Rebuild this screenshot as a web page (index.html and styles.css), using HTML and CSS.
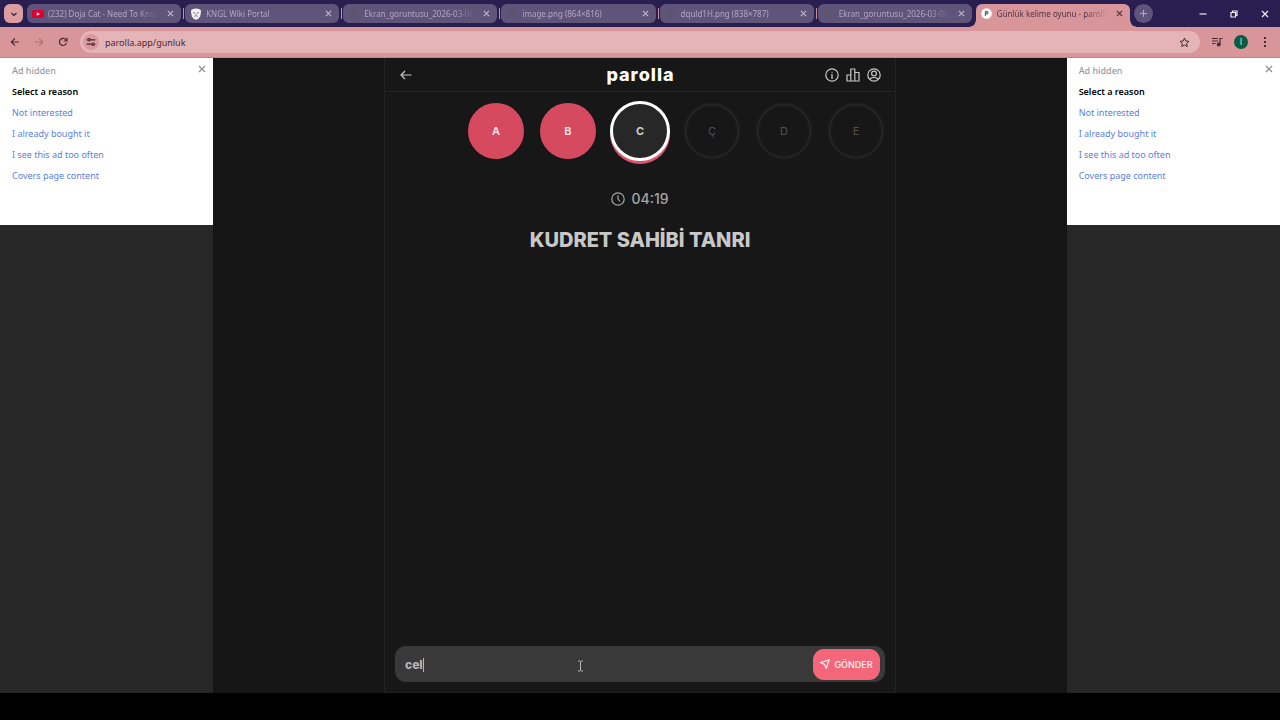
FILE: index.html
```html
<!DOCTYPE html>
<html lang="tr">
<head>
<meta charset="utf-8">
<meta name="viewport" content="width=device-width, initial-scale=1">
<title>Günlük kelime oyunu - parolla</title>
<link rel="stylesheet" href="styles.css">
</head>
<body>
<svg class="defs" aria-hidden="true">
  <symbol id="x" viewBox="0 0 8 8"><path d="M1 1l6 6M7 1L1 7"/></symbol>
</svg>

<header class="browser">
  <div class="tabbar">
    <button class="tab-search" aria-label="Search tabs"><svg width="8" height="8" viewBox="0 0 8 8"><path d="M1.500 3L4 5.500 6.500 3"/></svg></button>
    <div class="tabs">
      <div class="tab">
        <span class="favicon"><svg width="12" height="10" viewBox="0 0 12 10"><rect y="1" width="12" height="8" rx="2" fill="#e0002f"/><path d="M4.800 3.200v3.600L8 5z" fill="#fff"/></svg></span>
        <span class="tab-title">(232) Doja Cat - Need To Know</span>
        <button class="tab-close" aria-label="Close tab"><svg width="7" height="7"><use href="#x"/></svg></button>
      </div>
      <div class="tab">
        <span class="favicon"><svg width="12" height="12" viewBox="0 0 12 12"><path d="M1 2.200L3 1l3-.6L9 1l2 1.200-.2 3-.7 3.300L8 11l-2 .8L4 11 1.900 8.500 1.200 5.200z" fill="#f3f1f6"/><path d="M3 4.500l2 .8M9 4.500l-2 .8M4.200 8.300q1.800-1.200 3.600 0M6 5.500v1.300" fill="none" stroke="#5f5479" stroke-width=".8"/></svg></span>
        <span class="tab-title">KNGL Wiki Portal</span>
        <button class="tab-close" aria-label="Close tab"><svg width="7" height="7"><use href="#x"/></svg></button>
      </div>
      <div class="tab">
        <span class="favicon"><i class="blank"></i></span>
        <span class="tab-title">Ekran_goruntusu_2026-03-06_</span>
        <button class="tab-close" aria-label="Close tab"><svg width="7" height="7"><use href="#x"/></svg></button>
      </div>
      <div class="tab">
        <span class="favicon"><i class="blank"></i></span>
        <span class="tab-title">image.png (864×816)</span>
        <button class="tab-close" aria-label="Close tab"><svg width="7" height="7"><use href="#x"/></svg></button>
      </div>
      <div class="tab">
        <span class="favicon"><i class="blank"></i></span>
        <span class="tab-title">dquld1H.png (838×787)</span>
        <button class="tab-close" aria-label="Close tab"><svg width="7" height="7"><use href="#x"/></svg></button>
      </div>
      <div class="tab">
        <span class="favicon"><i class="blank"></i></span>
        <span class="tab-title">Ekran_goruntusu_2026-03-06_</span>
        <button class="tab-close" aria-label="Close tab"><svg width="7" height="7"><use href="#x"/></svg></button>
      </div>
      <div class="tab current">
        <span class="favicon"><svg width="11" height="11" viewBox="0 0 11 11"><circle cx="5.500" cy="5.500" r="5.300" fill="#fff"/><path d="M4.300 8V3.300h1.400a1.400 1.400 0 010 2.800H4.300" fill="#8a8" stroke="#4d6659" stroke-width="1"/></svg></span>
        <span class="tab-title">Günlük kelime oyunu - parolla</span>
        <button class="tab-close" aria-label="Close tab"><svg width="7" height="7"><use href="#x"/></svg></button>
      </div>
    </div>
    <button class="new-tab" aria-label="New tab"><svg width="9" height="9" viewBox="0 0 9 9"><path d="M4.500 1v7M1 4.500h7"/></svg></button>
    <div class="window-controls">
      <button aria-label="Minimize"><svg width="8" height="8" viewBox="0 0 8 8"><path d="M.5 4h7"/></svg></button>
      <button aria-label="Restore"><svg width="8" height="8" viewBox="0 0 8 8"><path d="M1 2.500h4.500V7H1zM2.500 2.500V1H7v4.500H5.500"/></svg></button>
      <button aria-label="Close"><svg width="8" height="8"><use href="#x"/></svg></button>
    </div>
  </div>
  <nav class="toolbar" aria-label="Browser">
    <div class="nav-buttons">
      <button aria-label="Back"><svg width="10" height="10" viewBox="0 0 10 10"><path d="M9 5H1.500M5 1.300L1.300 5 5 8.700"/></svg></button>
      <button class="disabled" aria-label="Forward" disabled><svg width="10" height="10" viewBox="0 0 10 10"><path d="M1 5h7.500M5 1.300L8.700 5 5 8.700"/></svg></button>
      <button aria-label="Reload"><svg width="10" height="10" viewBox="0 0 10 10"><path d="M8.500 6A3.600 3.600 0 118 2.800L9 4M9 .8V4H5.800"/></svg></button>
    </div>
    <div class="address">
      <button class="site-info" aria-label="Site information"><svg width="10" height="10" viewBox="0 0 10 10"><path d="M.8 2.800h1M4.200 2.800h5M.8 7.200h5M8.500 7.200h.8"/><circle cx="3" cy="2.800" r="1.200"/><circle cx="7.200" cy="7.200" r="1.200"/></svg></button>
      <label class="url"><span class="sr">Address</span><input type="text" value="parolla.app/gunluk"></label>
      <button class="star" aria-label="Bookmark"><svg width="11" height="11" viewBox="0 0 11 11"><path d="M5.500 1l1.300 3 3.200.3-2.400 2.100.7 3.200-2.800-1.700-2.800 1.700.7-3.200L1 4.300 4.200 4z"/></svg></button>
    </div>
    <div class="tools">
      <button aria-label="Media"><svg width="12" height="10" viewBox="0 0 12 10"><path d="M1 1.500h6M1 4h6M1 6.500h3.500M9 7V1.500h2.500"/><circle cx="7.700" cy="7.500" r="1.400" fill="#4a2a33"/></svg></button>
      <button class="avatar" aria-label="Profile">I</button>
      <button aria-label="Menu"><svg width="4" height="12" viewBox="0 0 4 12"><path class="dots" d="M1 1h2v2H1zM1 5h2v2H1zM1 9h2v2H1z"/></svg></button>
    </div>
  </nav>
</header>

<div class="page">
  <aside class="rail">
    <section class="ad">
      <button class="ad-close" aria-label="Close"><svg width="8" height="8"><use href="#x"/></svg></button>
      <p class="ad-status">Ad hidden</p>
      <h2>Select a reason</h2>
      <a href="#">Not interested</a>
      <a href="#">I already bought it</a>
      <a href="#">I see this ad too often</a>
      <a href="#">Covers page content</a>
    </section>
  </aside>

  <main class="game">
    <div class="game-head">
      <button aria-label="Geri"><svg width="12" height="12" viewBox="0 0 12 12"><path d="M11.500 6H1M5 2L1 6l4 4"/></svg></button>
      <h1>parolla</h1>
      <div class="head-actions">
        <button aria-label="Bilgi"><svg width="14" height="14" viewBox="0 0 14 14"><circle cx="7" cy="7" r="6.200"/><path d="M6.300 6.500H7v3.300M6 10h2.200M6.600 4.300h.9"/></svg></button>
        <button aria-label="İstatistik"><svg width="14" height="14" viewBox="0 0 14 14"><path d="M1 7h3.800v6H1zM4.800 1h4v12h-4zM8.800 4.500H13V13H8.800z"/></svg></button>
        <button aria-label="Profil"><svg width="14" height="14" viewBox="0 0 14 14"><circle cx="7" cy="7" r="6.200"/><circle cx="7" cy="5.600" r="2.400"/><path d="M3 11.500C3.500 9.800 4.700 9.500 7 9.500s3.500.3 4 2"/></svg></button>
      </div>
    </div>

    <ol class="letters">
      <li class="wrong">A</li>
      <li class="wrong">B</li>
      <li class="active">C</li>
      <li>Ç</li>
      <li>D</li>
      <li>E</li>
    </ol>

    <p class="timer"><svg width="14" height="14" viewBox="0 0 14 14"><circle cx="7" cy="7" r="6.200"/><path d="M7 3.200V7l2 2.500"/></svg><time>04:19</time></p>
    <h2 class="question">KUDRET SAHİBİ TANRI</h2>

    <form class="answer">
      <label class="field"><span class="sr">Cevap</span><input type="text" value="cel"><i class="caret"></i></label>
      <button type="button" class="send"><svg width="10" height="10" viewBox="0 0 10 10"><path d="M9.200.8L6.300 9.200 4.600 5.400.8 3.700z"/></svg>GÖNDER</button>
      <svg class="pointer" width="7" height="12" viewBox="0 0 7 12"><path d="M1 1h1.700l.8.600.8-.6H6M3.500 1.500v9M1 11h1.700l.8-.6.8.6H6"/></svg>
    </form>
  </main>

  <aside class="rail">
    <section class="ad">
      <button class="ad-close" aria-label="Close"><svg width="8" height="8"><use href="#x"/></svg></button>
      <p class="ad-status">Ad hidden</p>
      <h2>Select a reason</h2>
      <a href="#">Not interested</a>
      <a href="#">I already bought it</a>
      <a href="#">I see this ad too often</a>
      <a href="#">Covers page content</a>
    </section>
  </aside>
</div>
</body>
</html>
```

FILE: styles.css
```css
* { box-sizing: border-box; }

body {
  margin: 0;
  min-height: 100vh;
  padding-bottom: 27px;
  display: flex;
  flex-direction: column;
  background: #000;
  font-family: "Noto Sans", "Open Sans", sans-serif;
}

h1, h2, p, ol { margin: 0; padding: 0; }

button {
  display: flex;
  align-items: center;
  justify-content: center;
  padding: 0;
  border: 0;
  background: none;
  color: inherit;
  font: inherit;
}

input {
  width: 100%;
  padding: 0;
  border: 0;
  outline: 0;
  background: none;
  color: inherit;
  font: inherit;
}

svg {
  display: block;
  flex: none;
  fill: none;
  stroke: currentColor;
  stroke-width: 1.2;
}

.defs { position: absolute; width: 0; height: 0; }

.sr {
  position: absolute;
  width: 1px;
  height: 1px;
  overflow: hidden;
  clip-path: inset(50%);
}

/* Browser frame */
.browser { font-family: "Noto Sans", sans-serif; }

.tabbar {
  display: flex;
  height: 27px;
  padding: 4px 0 0 4px;
  background: #281e50;
  font-size: 8px;
}

.tab-search {
  width: 19px;
  height: 19px;
  margin-right: 4px;
  border-radius: 6px;
  background: #db9ca2;
  color: #3c2230;
}

.tabs {
  display: flex;
  flex: 0 1 1103px;
  min-width: 0;
  gap: 4px;
}

.tab {
  position: relative;
  display: flex;
  align-items: center;
  flex: 1 1 0;
  min-width: 0;
  height: 19px;
  padding: 0 7px 0 4px;
  border-radius: 6px;
  background: #5f5479;
  color: #b3a6c6;
}

.tab:not(.current):not(:nth-child(6))::after {
  content: "";
  position: absolute;
  top: 4px;
  right: -3px;
  width: 1px;
  height: 11px;
  background: #c88d9f;
}

.favicon {
  display: flex;
  justify-content: center;
  flex: none;
  width: 13px;
  margin-right: 4px;
}

.favicon svg { stroke: none; }

.blank {
  width: 8px;
  height: 9px;
  border-radius: 2px;
  background: #5d5570;
}

.tab-title {
  flex: 1;
  overflow: hidden;
  white-space: nowrap;
  mask-image: linear-gradient(to right, #000 80%, transparent);
}

.tab-close { margin-left: 8px; color: #c5bad3; }

.tab.current {
  height: 23px;
  padding-bottom: 4px;
  border-radius: 6px 6px 0 0;
  background: #d8969b;
  color: #553244;
}

.tab.current::before,
.tab.current::after {
  content: "";
  position: absolute;
  bottom: 0;
  width: 6px;
  height: 6px;
}

.tab.current::before {
  left: -6px;
  background: radial-gradient(circle at 0 0, transparent 5px, #d8969b 6px);
}

.tab.current::after {
  right: -6px;
  background: radial-gradient(circle at 100% 0, transparent 5px, #d8969b 6px);
}

.tab.current .tab-close { color: #4a2a33; }

.new-tab {
  width: 19px;
  height: 19px;
  margin-left: 4px;
  border-radius: 50%;
  background: #5f5479;
  color: #b3a6c6;
}

.window-controls {
  display: flex;
  margin-left: auto;
  color: #eeeaf4;
}

.window-controls button { width: 31px; height: 19px; }

.toolbar {
  display: flex;
  align-items: center;
  height: 31px;
  padding-left: 3px;
  border-bottom: 1px solid #c48389;
  background: #d8969b;
  color: #4a2a33;
}

.nav-buttons { display: flex; margin-right: 5px; }
.nav-buttons button { width: 24px; height: 24px; }
.nav-buttons .disabled { color: #ae6f77; }

.address {
  display: flex;
  align-items: center;
  flex: 1;
  height: 22px;
  padding: 0 10px 0 3px;
  border-radius: 11px;
  background: #e4b4b6;
  font-size: 9px;
}

.site-info {
  width: 16px;
  height: 16px;
  margin-right: 6px;
  border-radius: 50%;
  background: #d9999f;
}

.url { flex: 1; display: flex; }

.star svg { stroke-width: 1; }

.tools { display: flex; align-items: center; width: 80px; padding-left: 5px; }
.tools button { width: 24px; height: 24px; }
.tools .dots { fill: #4a2a33; stroke: none; }

.tools .avatar {
  width: 14px;
  height: 14px;
  margin: 0 5px;
  border-radius: 50%;
  background: #0b5c3e;
  color: #cfe5d8;
  font-family: Roboto, sans-serif;
  font-size: 9px;
}

/* Page */
.page {
  display: grid;
  grid-template-columns: 1fr 4fr 1fr;
  flex: 1;
  background: #151515;
}

.rail { background: #272727; }

.ad {
  position: relative;
  display: flex;
  flex-direction: column;
  align-items: flex-start;
  min-height: 167px;
  padding: 2px 12px;
  background: #fff;
  font-size: 9px;
  line-height: 21px;
}

.ad h2 { color: #000; font-size: 9px; font-weight: 600; }
.ad a { color: #5b80dc; text-decoration: none; }
.ad-status { color: #9a9aa2; font-weight: 500; }

.ad-close {
  position: absolute;
  top: 7px;
  right: 7px;
  color: #8c8c92;
}

.game {
  display: flex;
  flex-direction: column;
  justify-self: center;
  width: 60%;
  border: solid #222;
  border-width: 0 1px 1px;
  background: #171717;
  color: #c8c8c8;
  font-family: Inter, Roboto, sans-serif;
}

.game-head {
  display: grid;
  grid-template-columns: 1fr auto 1fr;
  align-items: center;
  height: 34px;
  padding: 0 14px 0 15px;
  border-bottom: 1px solid #222;
}

.game-head > button { justify-self: start; }

.game-head h1 {
  color: #fff;
  font-size: 18px;
  font-weight: 800;
  line-height: 32px;
  letter-spacing: 1px;
}

.head-actions { display: flex; justify-content: flex-end; gap: 7px; }

.letters {
  display: flex;
  align-items: center;
  justify-content: flex-end;
  gap: 16px;
  height: 78px;
  padding-right: 11px;
  list-style: none;
  font-size: 11px;
}

.letters li {
  display: grid;
  place-items: center;
  flex: none;
  width: 56px;
  height: 56px;
  border: 3px solid #222;
  border-radius: 50%;
  color: #505050;
}

.letters .wrong {
  border-color: #d64a60;
  background: #d64a60;
  color: #f6e4e8;
  font-weight: 600;
}

.letters .active {
  width: 60px;
  height: 60px;
  margin: 0 -2px;
  border: 3px solid #fff;
  background: #272727;
  box-shadow: 0 3px 0 #d9546b;
  color: #cfcfcf;
  font-weight: 700;
}

.timer {
  display: flex;
  align-items: center;
  justify-content: center;
  gap: 6px;
  margin-top: 19px;
  color: #a6a6a6;
  font-size: 14px;
  font-weight: 500;
  line-height: 20px;
}

.question {
  margin-top: 18px;
  font-size: 20px;
  font-weight: 800;
  line-height: 26px;
  text-align: center;
}

.answer {
  position: relative;
  display: flex;
  align-items: center;
  height: 36px;
  margin: auto 10px;
  margin-bottom: 10px;
  padding: 0 5px 0 10px;
  border-radius: 11px;
  background: #393939;
}

.field {
  position: relative;
  flex: 1;
  color: #b4b4b4;
  font-size: 12px;
  font-weight: 800;
}

.caret {
  position: absolute;
  top: 1px;
  left: 18px;
  width: 1px;
  height: 14px;
  background: #b4b4b4;
}

.send {
  gap: 4px;
  width: 67px;
  height: 31px;
  border-radius: 11px;
  background: #f4677a;
  color: #fff0f2;
  font-size: 9px;
  font-weight: 500;
}

.pointer {
  position: absolute;
  top: 14px;
  left: 182px;
  color: #b8b8b8;
  stroke-width: 1;
}
```
